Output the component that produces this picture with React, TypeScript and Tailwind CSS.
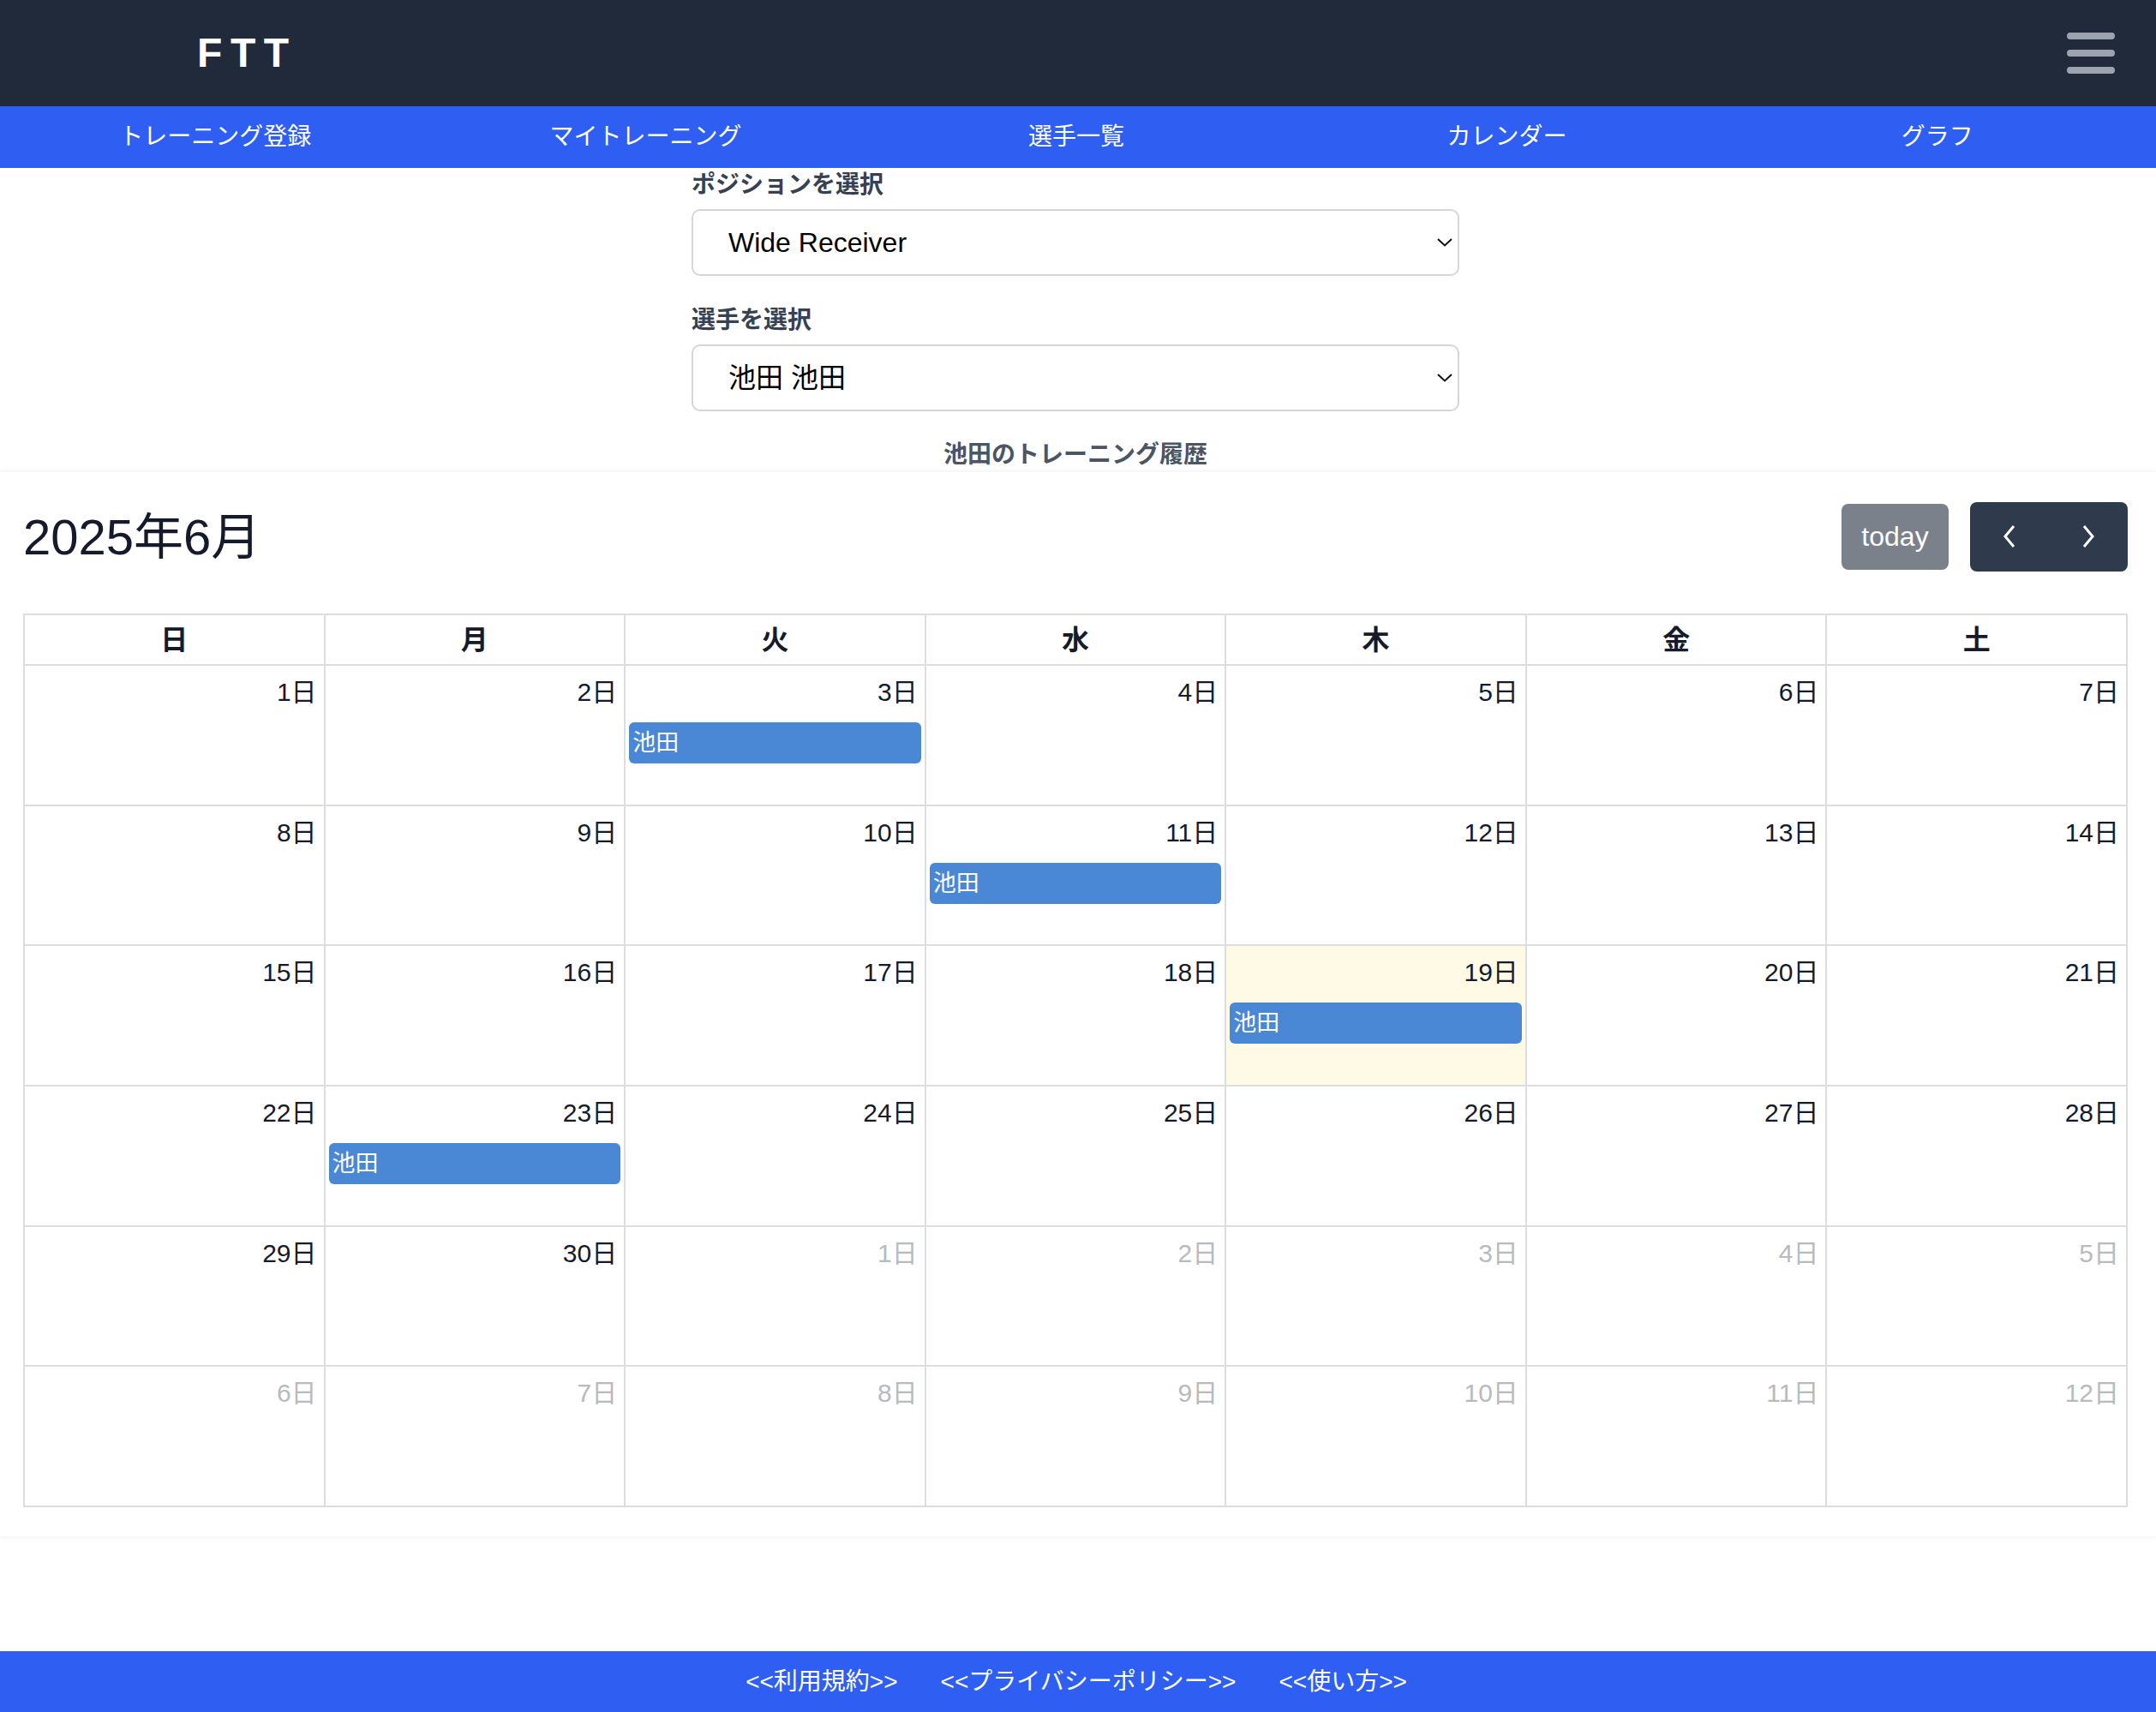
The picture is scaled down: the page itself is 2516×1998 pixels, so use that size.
import React from "react";

type Day = { n: number; cur: boolean; ev?: boolean; today?: boolean };

const weeks: Day[][] = (() => {
  const all: Day[] = [];
  for (let i = 1; i <= 30; i++) {
    all.push({ n: i, cur: true, ev: [3, 11, 19, 23].includes(i), today: i === 19 });
  }
  for (let i = 1; i <= 12; i++) all.push({ n: i, cur: false });
  const w: Day[][] = [];
  for (let r = 0; r < 6; r++) w.push(all.slice(r * 7, r * 7 + 7));
  return w;
})();

const dows = ["日", "月", "火", "水", "木", "金", "土"];

function SelectBox({ value }: { value: string }) {
  return (
    <div className="relative mt-[8px] h-[78px]">
      <select
        className="h-full w-full appearance-none rounded-[10px] border-2 border-[#d4d6db] bg-white pl-[41px] text-[32px] text-black outline-none"
        defaultValue={value}
      >
        <option>{value}</option>
      </select>
      <svg
        className="pointer-events-none absolute right-[8px] top-[34px]"
        width="18"
        height="10"
        viewBox="0 0 18 10"
        fill="none"
      >
        <path d="M1 1 L9 8.5 L17 1" stroke="#111" strokeWidth="2" />
      </svg>
    </div>
  );
}

export default function App() {
  return (
    <div className="flex min-h-[1998px] flex-col bg-white font-['Liberation_Sans','Noto_Sans_CJK_JP',sans-serif]">
      {/* Header */}
      <header className="flex h-[124px] items-center justify-between bg-[#212a3a] pl-[230px] pr-[48px]">
        <div className="text-[48px] font-bold tracking-[0.2em] text-white">FTT</div>
        <div className="flex flex-col gap-[12px]">
          <div className="h-[8px] w-[56px] rounded-full bg-[#9ca2ae]" />
          <div className="h-[8px] w-[56px] rounded-full bg-[#9ca2ae]" />
          <div className="h-[8px] w-[56px] rounded-full bg-[#9ca2ae]" />
        </div>
      </header>

      {/* Nav */}
      <nav className="grid h-[72px] grid-cols-5 items-center bg-[#2e5ff2] pr-[4px] text-[28px] text-white">
        <div className="text-center">トレーニング登録</div>
        <div className="text-center">マイトレーニング</div>
        <div className="text-center">選手一覧</div>
        <div className="text-center">カレンダー</div>
        <div className="text-center">グラフ</div>
      </nav>

      <main className="flex-1">
        <div className="flex justify-center pr-[6px]">
          <div className="w-[896px]">
            <div className="text-[28px] font-bold leading-[40px] text-[#374151]">ポジションを選択</div>
            <SelectBox value="Wide Receiver" />
            <div className="mt-[32px] text-[28px] font-bold leading-[40px] text-[#374151]">選手を選択</div>
            <SelectBox value="池田 池田" />
            <div className="mt-[31px] text-center text-[28px] font-bold leading-[40px] text-[#4b5563]">
              池田のトレーニング履歴
            </div>
          </div>
        </div>

        {/* Calendar card */}
        <section className="bg-white pb-[34px] pl-[27px] pr-[33px] pt-[35px] shadow-[0_0_6px_rgba(0,0,0,0.08)]">
          <div className="mb-[50px] flex h-[80px] items-center justify-between">
            <h2 className="text-[58px] font-normal text-[#151b2b]">2025年6月</h2>
            <div className="flex items-center gap-[25px]">
              <div className="flex h-[77px] w-[125px] items-center justify-center rounded-[8px] bg-[#7b818b] text-[32px] text-white">
                today
              </div>
              <div className="flex h-[81px] w-[184px] overflow-hidden rounded-[8px] bg-[#2f3b4d]">
                <div className="flex w-[92px] items-center justify-center">
                  <svg width="16" height="28" viewBox="0 0 16 28" fill="none">
                    <path d="M13 2 L3 14 L13 26" stroke="white" strokeWidth="3" />
                  </svg>
                </div>
                <div className="flex w-[92px] items-center justify-center">
                  <svg width="16" height="28" viewBox="0 0 16 28" fill="none">
                    <path d="M3 2 L13 14 L3 26" stroke="white" strokeWidth="3" />
                  </svg>
                </div>
              </div>
            </div>
          </div>

          <div className="border-l-2 border-t-2 border-[#dddddd]">
            <div className="grid grid-cols-7">
              {dows.map((d) => (
                <div
                  key={d}
                  className="flex h-[59px] items-center justify-center border-b-2 border-r-2 border-[#dddddd] text-[32px] font-bold text-[#151b2b]"
                >
                  {d}
                </div>
              ))}
            </div>
            {weeks.map((w, wi) => (
              <div key={wi} className="grid grid-cols-7">
                {w.map((d, di) => (
                  <div
                    key={di}
                    className={`h-[163.7px] border-b-2 border-r-2 border-[#dddddd] ${
                      d.today ? "bg-[#fffae6]" : ""
                    }`}
                  >
                    <div
                      className={`pr-[8px] pt-[11px] text-right text-[30px] leading-[40px] ${
                        d.cur ? "text-[#151b2b]" : "text-[#b8babe]"
                      }`}
                    >
                      {d.n}日
                    </div>
                    {d.ev && (
                      <div className="mx-[4px] mt-[15px] h-[48px] rounded-[6px] bg-[#4a87d5] pl-[4px] text-[27px] leading-[48px] text-white">
                        池田
                      </div>
                    )}
                  </div>
                ))}
              </div>
            ))}
          </div>
        </section>
      </main>

      <footer className="flex h-[71px] items-center justify-center gap-[50px] bg-[#2e5ff2] pr-[4px] text-[28px] text-white">
        <span>&lt;&lt;利用規約&gt;&gt;</span>
        <span>&lt;&lt;プライバシーポリシー&gt;&gt;</span>
        <span>&lt;&lt;使い方&gt;&gt;</span>
      </footer>
    </div>
  );
}
